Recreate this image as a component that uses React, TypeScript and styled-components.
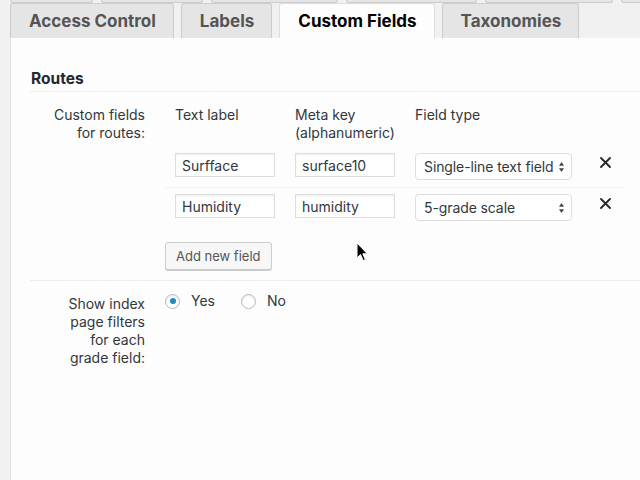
import React from "react";
import styled, { createGlobalStyle } from "styled-components";

const GlobalStyle = createGlobalStyle`
  html, body {
    margin: 0;
    padding: 0;
    background: #f1f1f1;
  }
  body {
    width: 640px;
    height: 480px;
    overflow: hidden;
    font-family: Inter, "Noto Sans", sans-serif;
    color: #32373c;
  }
`;

const stubs = [83, 102, 127, 131, 128, 40];
const tabs = ["Access Control", "Labels", "Custom Fields", "Taxonomies"];

const fields = [
  { label: "Surfface", key: "surface10", type: "Single-line text field" },
  { label: "Humidity", key: "humidity", type: "5-grade scale" },
];

const SelectArrows = () => (
  <svg width="5" height="10" viewBox="0 0 5 10">
    <path d="M2.5 0 L5 3.8 L0 3.8 Z" fill="#444" />
    <path d="M2.5 10 L5 6.2 L0 6.2 Z" fill="#444" />
  </svg>
);

const RemoveIcon = () => (
  <svg width="11" height="11" viewBox="0 0 11 11" style={{ display: "block" }}>
    <path
      d="M1 1 L10 10 M10 1 L1 10"
      stroke="#23282d"
      strokeWidth="1.8"
      strokeLinecap="round"
    />
  </svg>
);

const Cursor = () => (
  <CursorWrap>
    <svg width="13" height="20" viewBox="0 0 13 20">
      <path
        d="M1 1 L1 16 L4.5 12.6 L7.2 18.6 L9.4 17.6 L6.8 11.8 L11.4 11.8 Z"
        fill="#000"
        stroke="#fff"
        strokeWidth="1"
        strokeLinejoin="round"
      />
    </svg>
  </CursorWrap>
);

const App = () => {
  return (
    <>
      <GlobalStyle />
      <Page>
        <StubRow>
          {stubs.map((w, i) => (
            <Stub key={i} style={{ width: w }} />
          ))}
        </StubRow>
        <TabRow>
          {tabs.map((t) => (
            <Tab key={t} $active={t === "Custom Fields"}>
              {t}
            </Tab>
          ))}
        </TabRow>
        <Panel>
          <SectionTitle>Routes</SectionTitle>
          <FormRow>
            <RowLabel>
              Custom fields
              <br />
              for routes:
            </RowLabel>
            <RowField>
              <FieldsTable>
                <HeadCell>Text label</HeadCell>
                <HeadCell>
                  Meta key
                  <br />
                  (alphanumeric)
                </HeadCell>
                <HeadCell>Field type</HeadCell>
                <HeadCell />
                {fields.map((f, i) => (
                  <React.Fragment key={f.key}>
                    <DataCell $divided={i > 0}>
                      <TextInput readOnly value={f.label} />
                    </DataCell>
                    <DataCell $divided={i > 0}>
                      <TextInput readOnly value={f.key} />
                    </DataCell>
                    <DataCell $divided={i > 0}>
                      <SelectBox>
                        <span>{f.type}</span>
                        <SelectArrows />
                      </SelectBox>
                    </DataCell>
                    <RemoveCell $divided={i > 0}>
                      <RemoveIcon />
                    </RemoveCell>
                  </React.Fragment>
                ))}
              </FieldsTable>
              <AddButton>Add new field</AddButton>
            </RowField>
          </FormRow>
          <FormRow $divided>
            <RowLabel>
              Show index
              <br />
              page filters
              <br />
              for each
              <br />
              grade field:
            </RowLabel>
            <RadioGroup>
              <RadioLabel>
                <Radio $checked />
                Yes
              </RadioLabel>
              <RadioLabel>
                <Radio />
                No
              </RadioLabel>
            </RadioGroup>
          </FormRow>
        </Panel>
        <Cursor />
      </Page>
    </>
  );
};

const Page = styled.div`
  position: relative;
  height: 480px;
  padding-left: 10px;
  box-sizing: border-box;
`;

const StubRow = styled.div`
  display: flex;
  gap: 8px;
  height: 3px;
  overflow: hidden;
`;

const Stub = styled.div`
  flex: none;
  height: 3px;
  box-sizing: border-box;
  background: #e5e5e5;
  border: 1px solid #ccc;
  border-top: none;
  border-radius: 0 0 3px 3px;
`;

const TabRow = styled.div`
  display: flex;
  gap: 7px;
  height: 35px;
`;

const Tab = styled.div<{ $active?: boolean }>`
  box-sizing: border-box;
  height: 35px;
  padding: 0 17px 0 18px;
  line-height: 34px;
  font-size: 17px;
  font-weight: 700;
  white-space: nowrap;
  color: ${(p) => (p.$active ? "#000" : "#555")};
  background: ${(p) => (p.$active ? "#fdfdfd" : "#e5e5e5")};
  border: 1px solid ${(p) => (p.$active ? "#ddd" : "#ccc")};
  border-bottom: none;
  border-radius: 3px 3px 0 0;
`;

const Panel = styled.div`
  height: 442px;
  box-sizing: border-box;
  background: #fdfdfd;
  border-left: 1px solid #e2e2e2;
  padding: 31px 0 0 19px;
`;

const SectionTitle = styled.h3`
  margin: 0;
  padding: 0 0 3px 1px;
  font-size: 15.5px;
  line-height: 19px;
  font-weight: 700;
  color: #23282d;
  border-bottom: 1px solid #eee;
`;

const FormRow = styled.div<{ $divided?: boolean }>`
  display: grid;
  grid-template-columns: 115px 1fr;
  column-gap: 20px;
  border-top: ${(p) => (p.$divided ? "1px solid #eee" : "none")};
`;

const RowLabel = styled.div`
  padding-top: 14px;
  text-align: right;
  font-size: 14px;
  line-height: 18px;
  color: #32373c;
`;

const RowField = styled.div`
  padding: 14px 0 10px;
`;

const FieldsTable = styled.div`
  display: grid;
  grid-template-columns: 120px 120px 180px 39px;
  font-size: 14px;
  line-height: 18px;
`;

const HeadCell = styled.div`
  padding: 0 10px 5px;
  color: #32373c;
`;

const DataCell = styled.div<{ $divided?: boolean }>`
  padding: 6px 10px 7px;
  border-top: ${(p) => (p.$divided ? "1px solid #f1f1f1" : "none")};
`;

const RemoveCell = styled(DataCell)`
  padding: 10px 0 0 15px;
`;

const TextInput = styled.input`
  display: block;
  box-sizing: border-box;
  width: 100px;
  height: 24px;
  margin: 0;
  padding: 0 6px;
  font-family: inherit;
  font-size: 14px;
  color: #32373c;
  background: #fff;
  border: 1px solid #ddd;
  border-radius: 0;
  box-shadow: inset 0 1px 2px rgba(0, 0, 0, 0.07);
  outline: none;
`;

const SelectBox = styled.div`
  display: flex;
  align-items: center;
  justify-content: space-between;
  box-sizing: border-box;
  width: 157px;
  height: 27px;
  padding: 0 7px 0 8px;
  font-size: 14px;
  letter-spacing: -0.1px;
  color: #32373c;
  background: #fff;
  border: 1px solid #ddd;
  border-radius: 4px;
  white-space: nowrap;
`;

const AddButton = styled.button`
  display: block;
  margin-top: 14px;
  box-sizing: border-box;
  height: 28px;
  padding: 0 10px;
  font-family: inherit;
  font-size: 13px;
  color: #555;
  background: #f7f7f7;
  border: 1px solid #ccc;
  border-radius: 3px;
  box-shadow: 0 1px 0 #ccc;
`;

const RadioGroup = styled.div`
  display: flex;
  align-items: center;
  gap: 26px;
  height: 18px;
  padding-top: 11px;
  font-size: 14px;
  line-height: 18px;
`;

const RadioLabel = styled.label`
  display: flex;
  align-items: center;
  gap: 11px;
  color: #32373c;
`;

const Radio = styled.span<{ $checked?: boolean }>`
  position: relative;
  box-sizing: border-box;
  width: 15px;
  height: 15px;
  border: 1px solid #b4b9be;
  border-radius: 50%;
  background: #fff;
  box-shadow: inset 0 1px 2px rgba(0, 0, 0, 0.1);
  &::after {
    content: "";
    display: ${(p) => (p.$checked ? "block" : "none")};
    position: absolute;
    left: 3.5px;
    top: 3.5px;
    width: 6px;
    height: 6px;
    border-radius: 50%;
    background: #1e8cbe;
  }
`;

const CursorWrap = styled.div`
  position: absolute;
  left: 356px;
  top: 242px;
  line-height: 0;
`;

export default App;
